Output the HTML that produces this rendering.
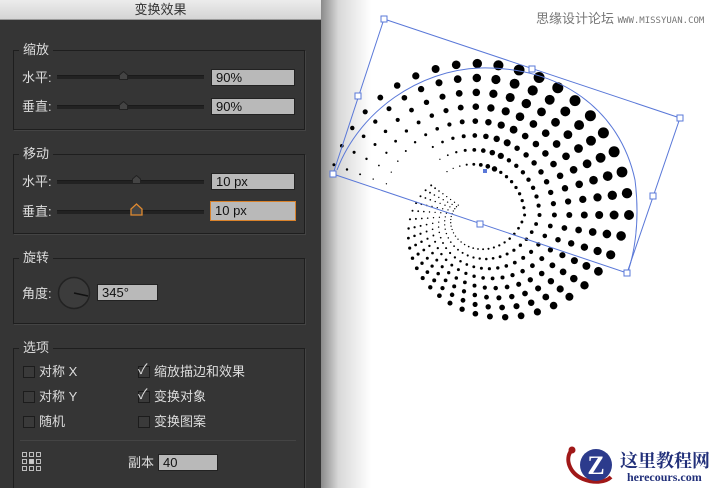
<!DOCTYPE html>
<html><head><meta charset="utf-8"><style>
*{margin:0;padding:0;box-sizing:border-box}
body{width:710px;height:488px;overflow:hidden;background:#fff;position:relative;font-family:"Liberation Sans","Noto Sans CJK SC",sans-serif;}
.panel{position:absolute;left:0;top:0;width:321px;height:488px;background:#353535;overflow:hidden}
.shadow{position:absolute;left:321px;top:0;width:50px;height:488px;background:linear-gradient(to right,#8a8a8a,#d8d8d8 35%,#fff);}
.title{position:absolute;left:0;top:0;width:321px;height:20px;background:linear-gradient(#ececec,#d4d4d4);border-bottom:1px solid #999;text-align:center;font-size:13px;line-height:20px;color:#333;}
.box{position:absolute;left:13px;width:292px;border:1px solid #1e1e1e;box-shadow:1px 1px 0 #444;}
.lg{position:absolute;background:#353535;color:#ddd;font-size:13px;padding:0 4px;left:5px;top:-10px;line-height:18px;}
.t{position:absolute;color:#ddd;font-size:13px;line-height:16px;}
.track{position:absolute;height:4px;background:#222;border-top:1px solid #1a1a1a;}
.inp{position:absolute;background:#b9b9b9;border:1px solid #222;height:17px;font-size:13px;line-height:15px;color:#111;padding-left:4px;}
.thumb{position:absolute;width:9px;height:9px;}
.cb{position:absolute;width:12px;height:12px;border:1px solid #1c1c1c;background:#3a3a3a;}
</style></head><body>
<div class="panel">
<div class="title">变换效果</div>

<div class="box" style="top:50px;height:80px"><div class="lg">缩放</div></div>
<div class="t" style="left:22px;top:70px">水平:</div>
<div class="track" style="left:57px;top:75px;width:147px"></div>
<svg class="thumb" style="left:119px;top:71px" viewBox="0 0 9 9"><path d="M0.5 8.5V4L4.5 0.5L8.5 4V8.5Z" fill="#444" stroke="#222"/></svg>
<div class="inp" style="left:211px;top:69px;width:84px">90%</div>
<div class="t" style="left:22px;top:99px">垂直:</div>
<div class="track" style="left:57px;top:105px;width:147px"></div>
<svg class="thumb" style="left:119px;top:101px" viewBox="0 0 9 9"><path d="M0.5 8.5V4L4.5 0.5L8.5 4V8.5Z" fill="#444" stroke="#222"/></svg>
<div class="inp" style="left:211px;top:98px;width:84px">90%</div>

<div class="box" style="top:154px;height:80px"><div class="lg">移动</div></div>
<div class="t" style="left:22px;top:174px">水平:</div>
<div class="track" style="left:57px;top:180px;width:147px"></div>
<svg class="thumb" style="left:132px;top:175px" viewBox="0 0 9 9"><path d="M0.5 8.5V4L4.5 0.5L8.5 4V8.5Z" fill="#444" stroke="#222"/></svg>
<div class="inp" style="left:211px;top:173px;width:84px">10 px</div>
<div class="t" style="left:22px;top:204px">垂直:</div>
<div class="track" style="left:57px;top:210px;width:147px"></div>
<svg style="position:absolute;left:130px;top:203px;width:13px;height:13px" viewBox="0 0 13 13"><path d="M1 12V6L6.5 1L12 6V12Z" fill="#444" stroke="#e08a30" stroke-width="1.3"/></svg>
<div class="inp" style="left:210px;top:201px;width:86px;height:20px;border:1px solid #d9822b;line-height:18px">10 px</div>

<div class="box" style="top:258px;height:66px"><div class="lg">旋转</div></div>
<div class="t" style="left:22px;top:286px">角度:</div>
<svg style="position:absolute;left:57px;top:276px;width:34px;height:34px" viewBox="0 0 34 34"><circle cx="17" cy="17" r="15.5" fill="#3c3c3c" stroke="#222" stroke-width="1.5"/><line x1="17" y1="17" x2="31" y2="20" stroke="#111" stroke-width="1.5"/></svg>
<div class="inp" style="left:97px;top:284px;width:61px">345°</div>

<div class="box" style="top:348px;height:160px"><div class="lg">选项</div></div>
<div class="cb" style="left:23px;top:366px"></div><div class="t" style="left:39px;top:364px">对称 X</div>
<div class="cb" style="left:23px;top:391px"></div><div class="t" style="left:39px;top:389px">对称 Y</div>
<div class="cb" style="left:23px;top:416px"></div><div class="t" style="left:39px;top:414px">随机</div>
<div class="cb" style="left:138px;top:366px"></div><div class="t" style="left:138px;top:361px;font-size:14px">✓</div><div class="t" style="left:154px;top:364px">缩放描边和效果</div>
<div class="cb" style="left:138px;top:391px"></div><div class="t" style="left:138px;top:386px;font-size:14px">✓</div><div class="t" style="left:154px;top:389px">变换对象</div>
<div class="cb" style="left:138px;top:416px"></div><div class="t" style="left:154px;top:414px">变换图案</div>
<div style="position:absolute;left:20px;top:440px;width:276px;height:1px;background:#222;border-bottom:1px solid #444"></div>
<svg style="position:absolute;left:22px;top:452px;width:19px;height:19px" viewBox="0 0 19 19" fill="none" stroke="#ccc" stroke-width="0.9"><rect x="0.5" y="0.5" width="4" height="4"/><rect x="7.5" y="0.5" width="4" height="4"/><rect x="14.5" y="0.5" width="4" height="4"/><rect x="0.5" y="7.5" width="4" height="4"/><rect x="7.5" y="7.5" width="4" height="4" fill="#ccc"/><rect x="14.5" y="7.5" width="4" height="4"/><rect x="0.5" y="14.5" width="4" height="4"/><rect x="7.5" y="14.5" width="4" height="4"/><rect x="14.5" y="14.5" width="4" height="4"/></svg>
<div class="t" style="left:128px;top:455px">副本</div>
<div class="inp" style="left:158px;top:454px;width:60px">40</div>
</div>
<div class="shadow"></div>

<svg id="art" style="position:absolute;left:0;top:0" width="710" height="488"></svg>
<div style="position:absolute;left:536px;top:8px;font-size:13px;color:#777">思缘设计论坛 <span style="font-size:9px;font-family:'DejaVu Sans Mono',monospace">WWW.MISSYUAN.COM</span></div>

<svg style="position:absolute;left:563px;top:443px;width:60px;height:45px" viewBox="0 0 60 45"><path d="M8 8C2 16 6 30 20 36C30 40 42 40 48 34" fill="none" stroke="#a01818" stroke-width="4"/><circle cx="9" cy="7" r="3.5" fill="#a01818"/><circle cx="33" cy="22" r="16" fill="#2c3b8c"/><text x="33" y="31" text-anchor="middle" font-family="Liberation Serif" font-weight="bold" font-size="26" fill="#fff">Z</text></svg>
<div style="position:absolute;left:620px;top:447px;font-size:18px;font-weight:bold;color:#22307a;font-family:'Liberation Serif','Noto Serif CJK SC',serif;">这里教程网</div>
<div style="position:absolute;left:627px;top:470px;font-size:12px;font-weight:bold;color:#22307a;font-family:'Liberation Serif',serif">herecours.com</div>

<script>
var s=document.getElementById('art'),h='';
var cx=472,cy=215;
function lerp(a,b,t){return a+(b-a)*t;}
for(var th=200;th<=580;th+=8){
 var R;
 if(th<360)R=147+(th-200)/160*10; else R=157*Math.exp(-(th-360)/190);
 if(R<10)break;
 var a=th*Math.PI/180;
 var sz;
 if(th<290)sz=lerp(3,11,(th-200)/90); else if(th<340)sz=11; else if(th<440)sz=lerp(11,6,(th-340)/100); else sz=lerp(6,2,Math.min(1,(th-440)/100));
 var rows=th<240?5:8;
 for(var j=0;j<rows;j++){
  var r=R*(1-j*0.095);
  if(r<6)break;
  var f;
  if(th<300) f=Math.max(0.12,1-j*0.18*(1-(th-200)/160));
  else f=Math.max(0.25,1-j*0.1);
  var d=sz*f;
  if(d<1.3)d=1.3;
  h+='<circle cx="'+(cx+r*Math.cos(a)).toFixed(1)+'" cy="'+(cy+r*Math.sin(a)).toFixed(1)+'" r="'+(d/2).toFixed(2)+'" fill="#000"/>';
 }
}
h+='<g fill="none" stroke="#5a78d8" stroke-width="1">';
h+='<polygon points="384,19 680,118 627,273 333,174"/>';
h+='<path d="M337,170 C360,110 420,70 480,68 C560,66 620,110 635,180 C640,220 635,250 628,272"/>';
var pts=[[384,19],[680,118],[627,273],[333,174],[532,69],[653,196],[480,224],[358,96]];
pts.forEach(function(p){h+='<rect x="'+(p[0]-3)+'" y="'+(p[1]-3)+'" width="6" height="6" fill="#fff"/>';});
h+='</g><rect x="483" y="169" width="4" height="4" fill="#5a78d8"/>';
s.innerHTML=h;
</script>
</body></html>
